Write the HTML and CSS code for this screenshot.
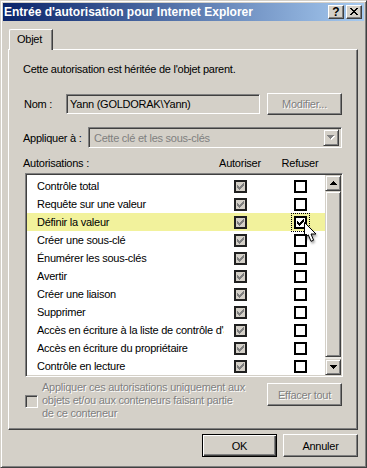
FILE: index.html
```html
<!DOCTYPE html>
<html lang="fr">
	<head>
		<meta charset="UTF-8" />
		<meta name="viewport" content="width=device-width, initial-scale=1.0" />
		<title>Entrée d'autorisation pour Internet Explorer</title>
		<link rel="stylesheet" href="styles.css">
	</head>
	<body>
		<svg class="defs" width="0" height="0">
			<symbol id="chk" viewBox="0 0 7 7">
				<path d="M6 0h1v1h-1z M5 1h2v1h-2z M0 2h1v1h-1z M4 2h3v1h-3z M0 3h2v1h-2z M3 3h3v1h-3z M0 4h5v1h-5z M1 5h3v1h-3z M2 6h1v1h-1z" />
			</symbol>
		</svg>
		<div class="window">
			<div class="titlebar">
				<span class="title">Entrée d'autorisation pour Internet Explorer</span>
				<div class="caption-buttons">
					<div class="cap-btn help">?</div>
					<div class="cap-btn close">
						<svg width="8" height="7" viewBox="0 0 8 7" shape-rendering="crispEdges"><path d="M0 0h2v1h-2z M6 0h2v1h-2z M1 1h2v1h-2z M5 1h2v1h-2z M2 2h4v1h-4z M3 3h2v1h-2z M2 4h4v1h-4z M1 5h2v1h-2z M5 5h2v1h-2z M0 6h2v1h-2z M6 6h2v1h-2z" /></svg>
					</div>
				</div>
			</div>

			<div class="content">
				<div class="tabs">
					<div class="tab">Objet</div>
				</div>
				<div class="panel">
					<p class="info">Cette autorisation est héritée de l'objet parent.</p>

					<div class="field-row name-row">
						<span class="label nom">Nom :</span>
						<div class="textbox">Yann (GOLDORAK\Yann)</div>
						<div class="btn disabled modify">Modifier...</div>
					</div>

					<div class="field-row apply-row">
						<span class="label apply">Appliquer à :</span>
						<div class="combo">
							<span class="combo-text">Cette clé et les sous-clés</span>
							<div class="combo-btn">
								<svg width="8" height="5" viewBox="0 0 8 5" shape-rendering="crispEdges">
									<path fill="#fff" d="M1 1h7v1h-1v1h-1v1h-1v1h-1v-1h-1v-1h-1v-1h-1z" />
									<path fill="#808080" d="M0 0h7v1h-1v1h-1v1h-1v1h-1v-1h-1v-1h-1v-1h-1z" />
								</svg>
							</div>
						</div>
					</div>

					<div class="list-head">
						<span class="col-name">Autorisations :</span>
						<span class="col-check">Autoriser</span>
						<span class="col-check">Refuser</span>
					</div>

					<div class="listbox">
						<div class="rows">
							<div class="row">
								<span class="perm">Contrôle total</span>
								<span class="cell allow"><span class="box"><svg class="tick" width="7" height="7"><use href="#chk" /></svg></span></span>
								<span class="cell deny"><span class="box"></span></span>
							</div>
							<div class="row">
								<span class="perm">Requête sur une valeur</span>
								<span class="cell allow"><span class="box"><svg class="tick" width="7" height="7"><use href="#chk" /></svg></span></span>
								<span class="cell deny"><span class="box"></span></span>
							</div>
							<div class="row hot">
								<span class="perm">Définir la valeur</span>
								<span class="cell allow"><span class="box"><svg class="tick" width="7" height="7"><use href="#chk" /></svg></span></span>
								<span class="cell deny">
									<span class="box focused"><svg class="tick" width="7" height="7"><use href="#chk" /></svg></span>
									<svg class="cursor" width="14" height="21" viewBox="0 0 14 21">
										<polygon points="0.5,0.5 0.5,16.5 4.3,12.8 7,19.3 9.6,18.2 7,12 12,12" fill="#fff" stroke="#000" stroke-width="1" stroke-linejoin="miter" />
									</svg>
								</span>
							</div>
							<div class="row">
								<span class="perm">Créer une sous-clé</span>
								<span class="cell allow"><span class="box"><svg class="tick" width="7" height="7"><use href="#chk" /></svg></span></span>
								<span class="cell deny"><span class="box"></span></span>
							</div>
							<div class="row">
								<span class="perm">Énumérer les sous-clés</span>
								<span class="cell allow"><span class="box"><svg class="tick" width="7" height="7"><use href="#chk" /></svg></span></span>
								<span class="cell deny"><span class="box"></span></span>
							</div>
							<div class="row">
								<span class="perm">Avertir</span>
								<span class="cell allow"><span class="box"><svg class="tick" width="7" height="7"><use href="#chk" /></svg></span></span>
								<span class="cell deny"><span class="box"></span></span>
							</div>
							<div class="row">
								<span class="perm">Créer une liaison</span>
								<span class="cell allow"><span class="box"><svg class="tick" width="7" height="7"><use href="#chk" /></svg></span></span>
								<span class="cell deny"><span class="box"></span></span>
							</div>
							<div class="row">
								<span class="perm">Supprimer</span>
								<span class="cell allow"><span class="box"><svg class="tick" width="7" height="7"><use href="#chk" /></svg></span></span>
								<span class="cell deny"><span class="box"></span></span>
							</div>
							<div class="row">
								<span class="perm">Accès en écriture à la liste de contrôle d'accès</span>
								<span class="cell allow"><span class="box"><svg class="tick" width="7" height="7"><use href="#chk" /></svg></span></span>
								<span class="cell deny"><span class="box"></span></span>
							</div>
							<div class="row">
								<span class="perm">Accès en écriture du propriétaire</span>
								<span class="cell allow"><span class="box"><svg class="tick" width="7" height="7"><use href="#chk" /></svg></span></span>
								<span class="cell deny"><span class="box"></span></span>
							</div>
							<div class="row">
								<span class="perm">Contrôle en lecture</span>
								<span class="cell allow"><span class="box"><svg class="tick" width="7" height="7"><use href="#chk" /></svg></span></span>
								<span class="cell deny"><span class="box"></span></span>
							</div>
						</div>
						<div class="scrollbar">
							<div class="sb-btn">
								<svg width="7" height="4" viewBox="0 0 7 4" shape-rendering="crispEdges"><path d="M3 0h1v1h1v1h1v1h1v1h-7v-1h1v-1h1v-1h1z" /></svg>
							</div>
							<div class="sb-track"><div class="sb-thumb"></div></div>
							<div class="sb-btn">
								<svg width="7" height="4" viewBox="0 0 7 4" shape-rendering="crispEdges"><path d="M0 0h7v1h-1v1h-1v1h-1v1h-1v-1h-1v-1h-1v-1h-1z" /></svg>
							</div>
						</div>
					</div>

					<div class="bottom">
						<span class="check3d"></span>
						<p class="inherit-text">Appliquer ces autorisations uniquement aux<br>objets et/ou aux conteneurs faisant partie<br>de ce conteneur</p>
						<div class="btn disabled clear">Effacer tout</div>
					</div>
				</div>

				<div class="footer">
					<div class="btn default">OK</div>
					<div class="btn">Annuler</div>
				</div>
			</div>
		</div>
	</body>
</html>
```

FILE: styles.css
```css
* {
	margin: 0;
	padding: 0;
	box-sizing: border-box;
}
body {
	background-color: #d4d0c8;
	font-family: "Liberation Sans", Arial, sans-serif;
	font-size: 11px;
	letter-spacing: -0.25px;
	color: #000;
}
.defs {
	position: absolute;
}

/* window frame */
.window {
	width: 367px;
	height: 468px;
	display: flex;
	flex-direction: column;
	padding: 2px;
	border: 1px solid;
	border-color: #d4d0c8 #404040 #404040 #d4d0c8;
	box-shadow: inset 1px 1px #fff, inset -1px -1px #808080;
	background-color: #d4d0c8;
}
.titlebar {
	height: 18px;
	display: flex;
	align-items: center;
	padding-left: 1px;
	background: linear-gradient(to right, #0a246a, #a6caf0);
}
.title {
	color: #fff;
	font-weight: bold;
	font-size: 12px;
	letter-spacing: 0;
}
.caption-buttons {
	margin-left: auto;
	margin-right: 2px;
	display: flex;
	gap: 2px;
}
.cap-btn {
	width: 16px;
	height: 14px;
	display: flex;
	align-items: center;
	justify-content: center;
	border: 1px solid;
	border-color: #fff #404040 #404040 #fff;
	box-shadow: inset -1px -1px #808080;
	background-color: #d4d0c8;
}
.help {
	font-weight: bold;
	font-size: 12px;
	letter-spacing: 0;
	padding-bottom: 1px;
}
.close svg {
	margin-top: -1px;
}

/* dialog body */
.content {
	padding: 8px 6px 0 5px;
}
.tabs {
	display: flex;
	padding-left: 1px;
}
.tab {
	position: relative;
	z-index: 1;
	width: 44px;
	height: 21px;
	margin-bottom: -1px;
	padding-left: 7px;
	line-height: 19px;
	border-top: 1px solid #fff;
	border-left: 1px solid #fff;
	border-right: 1px solid #404040;
	border-top-left-radius: 2px;
	box-shadow: inset -1px 0 #808080;
	background-color: #d4d0c8;
}
.panel {
	border: 1px solid;
	border-color: #fff #404040 #404040 #fff;
	box-shadow: inset -1px -1px #808080;
	padding: 13px 15px 9px 14px;
}
.info {
	line-height: 13px;
	margin-bottom: 17px;
}

.field-row {
	display: flex;
	align-items: center;
}
.name-row {
	height: 22px;
	margin-bottom: 12px;
}
.apply-row {
	height: 21px;
	margin-bottom: 9px;
}
.label.nom {
	width: 43px;
	padding-left: 1px;
}
.label.apply {
	width: 65px;
}
.textbox {
	width: 194px;
	height: 20px;
	padding: 3px 0 0 3px;
	border: 1px solid;
	border-color: #808080 #fff #fff #808080;
	box-shadow: inset 1px 1px #404040, inset -1px -1px #d4d0c8;
	white-space: nowrap;
}
.combo {
	flex: 1;
	height: 21px;
	display: flex;
	align-items: center;
	padding: 2px;
	border: 1px solid;
	border-color: #808080 #fff #fff #808080;
	box-shadow: inset 1px 1px #404040, inset -1px -1px #d4d0c8;
}
.combo-text {
	color: #808080;
	padding-left: 3px;
}
.combo-btn {
	margin-left: auto;
	width: 16px;
	height: 17px;
	display: flex;
	align-items: center;
	justify-content: center;
	border: 1px solid;
	border-color: #d4d0c8 #404040 #404040 #d4d0c8;
	box-shadow: inset 1px 1px #fff, inset -1px -1px #808080;
}

/* buttons */
.btn {
	width: 75px;
	height: 23px;
	display: flex;
	align-items: center;
	justify-content: center;
	border: 1px solid;
	border-color: #fff #404040 #404040 #fff;
	box-shadow: inset -1px -1px #808080;
	background-color: #d4d0c8;
}
.btn.disabled {
	color: #808080;
	text-shadow: 1px 1px #fff;
}
.btn.default {
	border-color: #000;
	box-shadow: inset 1px 1px #fff, inset -1px -1px #404040, inset -2px -2px #808080;
}
.modify {
	margin-left: auto;
	height: 22px;
}

/* permission list */
.list-head {
	display: flex;
	line-height: 13px;
	margin-bottom: 3px;
}
.col-name {
	width: 187px;
}
.col-check {
	width: 60px;
	text-align: center;
}
.listbox {
	height: 204px;
	margin: 0 -1px 0 2px;
	display: flex;
	border: 1px solid;
	border-color: #808080 #fff #fff #808080;
	background-color: #fff;
	box-shadow: inset 1px 1px #404040, inset -1px -1px #d4d0c8;
	padding: 1px;
	overflow: hidden;
}
.rows {
	flex: 1;
	padding-top: 2px;
}
.row {
	height: 18px;
	display: flex;
	align-items: center;
}
.row.hot {
	background-color: #f2f29c;
}
.perm {
	width: 197px;
	padding-left: 10px;
	white-space: nowrap;
	overflow: hidden;
}
.cell {
	width: 32px;
	height: 18px;
	display: flex;
	align-items: center;
	justify-content: center;
}
.cell.deny {
	position: relative;
	margin-left: 28px;
}
.box {
	width: 13px;
	height: 13px;
	display: flex;
	align-items: center;
	justify-content: center;
	border: 2px solid #000;
	background-color: #fff;
}
.allow .box {
	border-color: #202020;
	background-color: #d4d0c8;
}
.tick {
	fill: #000;
	shape-rendering: crispEdges;
}
.allow .tick {
	fill: #808080;
}
.box.focused {
	outline: 1px dotted #000;
	outline-offset: 2px;
}
.cursor {
	position: absolute;
	left: 20px;
	top: 9px;
	filter: drop-shadow(1px 2px 1px rgba(0, 0, 0, 0.35));
}

.scrollbar {
	width: 16px;
	display: flex;
	flex-direction: column;
}
.sb-btn {
	height: 16px;
	display: flex;
	align-items: center;
	justify-content: center;
	border: 1px solid;
	border-color: #d4d0c8 #404040 #404040 #d4d0c8;
	box-shadow: inset 1px 1px #fff, inset -1px -1px #808080;
	background-color: #d4d0c8;
}
.sb-track {
	flex: 1;
	background-color: #ebe9e4;
}
.sb-thumb {
	height: 166px;
	border: 1px solid;
	border-color: #d4d0c8 #404040 #404040 #d4d0c8;
	box-shadow: inset 1px 1px #fff, inset -1px -1px #808080;
	background-color: #d4d0c8;
}

/* inheritance option */
.bottom {
	display: flex;
	align-items: flex-start;
	margin-top: 4px;
	height: 39px;
}
.check3d {
	width: 13px;
	height: 13px;
	margin: 14px 4px 0 2px;
	border: 1px solid;
	border-color: #808080 #fff #fff #808080;
	box-shadow: inset 1px 1px #404040, inset -1px -1px #d4d0c8;
}
.inherit-text {
	line-height: 13px;
	color: #808080;
	text-shadow: 1px 1px #fff;
}
.clear {
	margin-left: auto;
	margin-top: 2px;
}

.footer {
	display: flex;
	justify-content: flex-end;
	gap: 6px;
	margin-top: 4px;
}
```
